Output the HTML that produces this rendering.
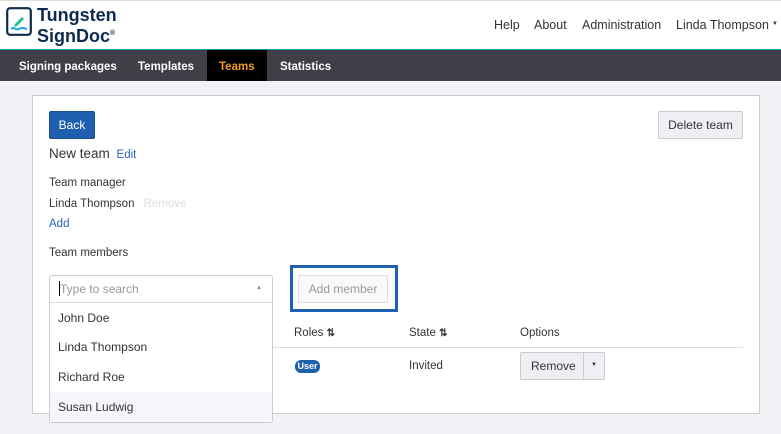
<!DOCTYPE html>
<html><head><meta charset="utf-8">
<style>
*{box-sizing:border-box;margin:0;padding:0}
body{width:781px;height:434px;overflow:hidden;background:#f2f2f6;font-family:"Liberation Sans",sans-serif;font-size:12px;color:#333;position:relative}
.a{position:absolute;white-space:nowrap}
#hdr{position:absolute;left:0;top:0;width:781px;height:49px;background:#fff;border-top:1px solid #ddd}
#nav{position:absolute;left:0;top:49px;width:781px;height:32px;background:#3e3f47;border-top:1px solid #1aa3b8}
#nav span{position:absolute;top:11px;color:#fff;font-weight:bold;font-size:11.5px}
#panel{position:absolute;left:32px;top:95px;width:728px;height:319px;background:#fff;border:1px solid #ccc}
.link{color:#2a62b8}
</style></head><body>
<div id="hdr">
 <svg class="a" style="left:6px;top:6px" width="26" height="29" viewBox="0 0 26 29">
  <rect x="1.2" y="1.2" width="23.6" height="26.6" rx="3" fill="none" stroke="#0d2a4f" stroke-width="2.2"/>
  <path d="M9 17l7-7 2 2-7 7-3 1z" fill="#1fbf8f"/>
  <path d="M5 22c3-3 5 2 8 0s4-1 8 0" fill="none" stroke="#22a6e0" stroke-width="2"/>
 </svg>
 <div class="a" style="left:37px;top:4px;font-size:18px;font-weight:bold;color:#0d2a4f;line-height:20px">Tungsten</div>
 <div class="a" style="left:37px;top:23px;font-size:18px;font-weight:bold;color:#0d2a4f;line-height:20px">SignDoc<sup style="font-size:7px">®</sup></div>
 <div class="a" style="left:494px;top:17px;font-size:12.5px">Help</div>
 <div class="a" style="left:534px;top:17px;font-size:12.5px">About</div>
 <div class="a" style="left:582px;top:17px;font-size:12.5px">Administration</div>
 <div class="a" style="left:676px;top:17px;font-size:12.5px">Linda Thompson</div>
 <div class="a" style="left:772px;top:20px;font-size:6px">▼</div>
</div>
<div id="nav">
 <span style="left:19px">Signing packages</span>
 <span style="left:138px">Templates</span>
 <div class="a" style="left:207px;top:0;width:60px;height:31px;background:#000"></div>
 <span style="left:219px;color:#f29a1e">Teams</span>
 <span style="left:280px">Statistics</span>
</div>
<div id="panel"></div>
<div class="a" style="left:49px;top:111px;width:46px;height:28px;background:#1f5fb0;border:1px solid #184d90;border-radius:2px;color:#fff;font-size:12px;text-align:center;line-height:26px">Back</div>
<div class="a" style="left:658px;top:111px;width:85px;height:28px;background:#eeeff4;border:1px solid #ccc;border-radius:2px;text-align:center;line-height:26px;font-size:12px">Delete team</div>
<div class="a" style="left:49px;top:146px;font-size:13.5px">New team <span class="link" style="font-size:11.5px;margin-left:3px">Edit</span></div>
<div class="a" style="left:49px;top:177px;font-size:11.5px">Team manager</div>
<div class="a" style="left:49px;top:198px;font-size:11.5px">Linda Thompson <span style="color:#ddd;margin-left:6px">Remove</span></div>
<div class="a link" style="left:49px;top:218px;font-size:11.5px">Add</div>
<div class="a" style="left:49px;top:247px;font-size:11.5px">Team members</div>
<div class="a" style="left:290px;top:265px;width:108px;height:47px;border:3px solid #1f5fb0"></div>
<div class="a" style="left:298px;top:275px;width:90px;height:28px;border:1px solid #ddd;background:#f8f9fb;color:#999;text-align:center;line-height:26px;font-size:12px">Add member</div>
<div class="a" style="left:294px;top:327px;font-size:11.5px">Roles <b style="font-size:10px">⇅</b></div>
<div class="a" style="left:409px;top:327px;font-size:11.5px">State <b style="font-size:10px">⇅</b></div>
<div class="a" style="left:520px;top:327px;font-size:11.5px">Options</div>
<div class="a" style="left:272px;top:347px;width:471px;height:1px;background:#ddd"></div>
<div class="a" style="left:295px;top:360px;width:25px;height:13px;background:#1f5fb0;border-radius:6px;color:#fff;font-size:9px;font-weight:bold;text-align:center;line-height:13px">User</div>
<div class="a" style="left:409px;top:360px;font-size:11.5px">Invited</div>
<div class="a" style="left:520px;top:352px;width:85px;height:28px;background:#eeeff4;border:1px solid #ccc;border-radius:2px"></div>
<div class="a" style="left:583px;top:352px;width:1px;height:28px;background:#ccc"></div>
<div class="a" style="left:531px;top:359px;font-size:12px">Remove</div>
<div class="a" style="left:591px;top:362px;font-size:6px">▼</div>
<div class="a" style="left:49px;top:275px;width:224px;height:148px;background:#fff;border:1px solid #ccc;border-radius:3px"></div>
<div class="a" style="left:50px;top:302px;width:222px;height:1px;background:#ddd"></div>
<div class="a" style="left:59px;top:281px;width:1px;height:15px;background:#000"></div>
<div class="a" style="left:60px;top:282px;font-size:12px;color:#999">Type to search</div>
<div class="a" style="left:256px;top:285px;font-size:6px;color:#888">▲</div>
<div class="a" style="left:58px;top:311px;font-size:12px">John Doe</div>
<div class="a" style="left:58px;top:340px;font-size:12px">Linda Thompson</div>
<div class="a" style="left:58px;top:370px;font-size:12px">Richard Roe</div>
<div class="a" style="left:50px;top:392px;width:222px;height:30px;background:#f4f6f9"></div>
<div class="a" style="left:58px;top:400px;font-size:12px">Susan Ludwig</div>
</body></html>
